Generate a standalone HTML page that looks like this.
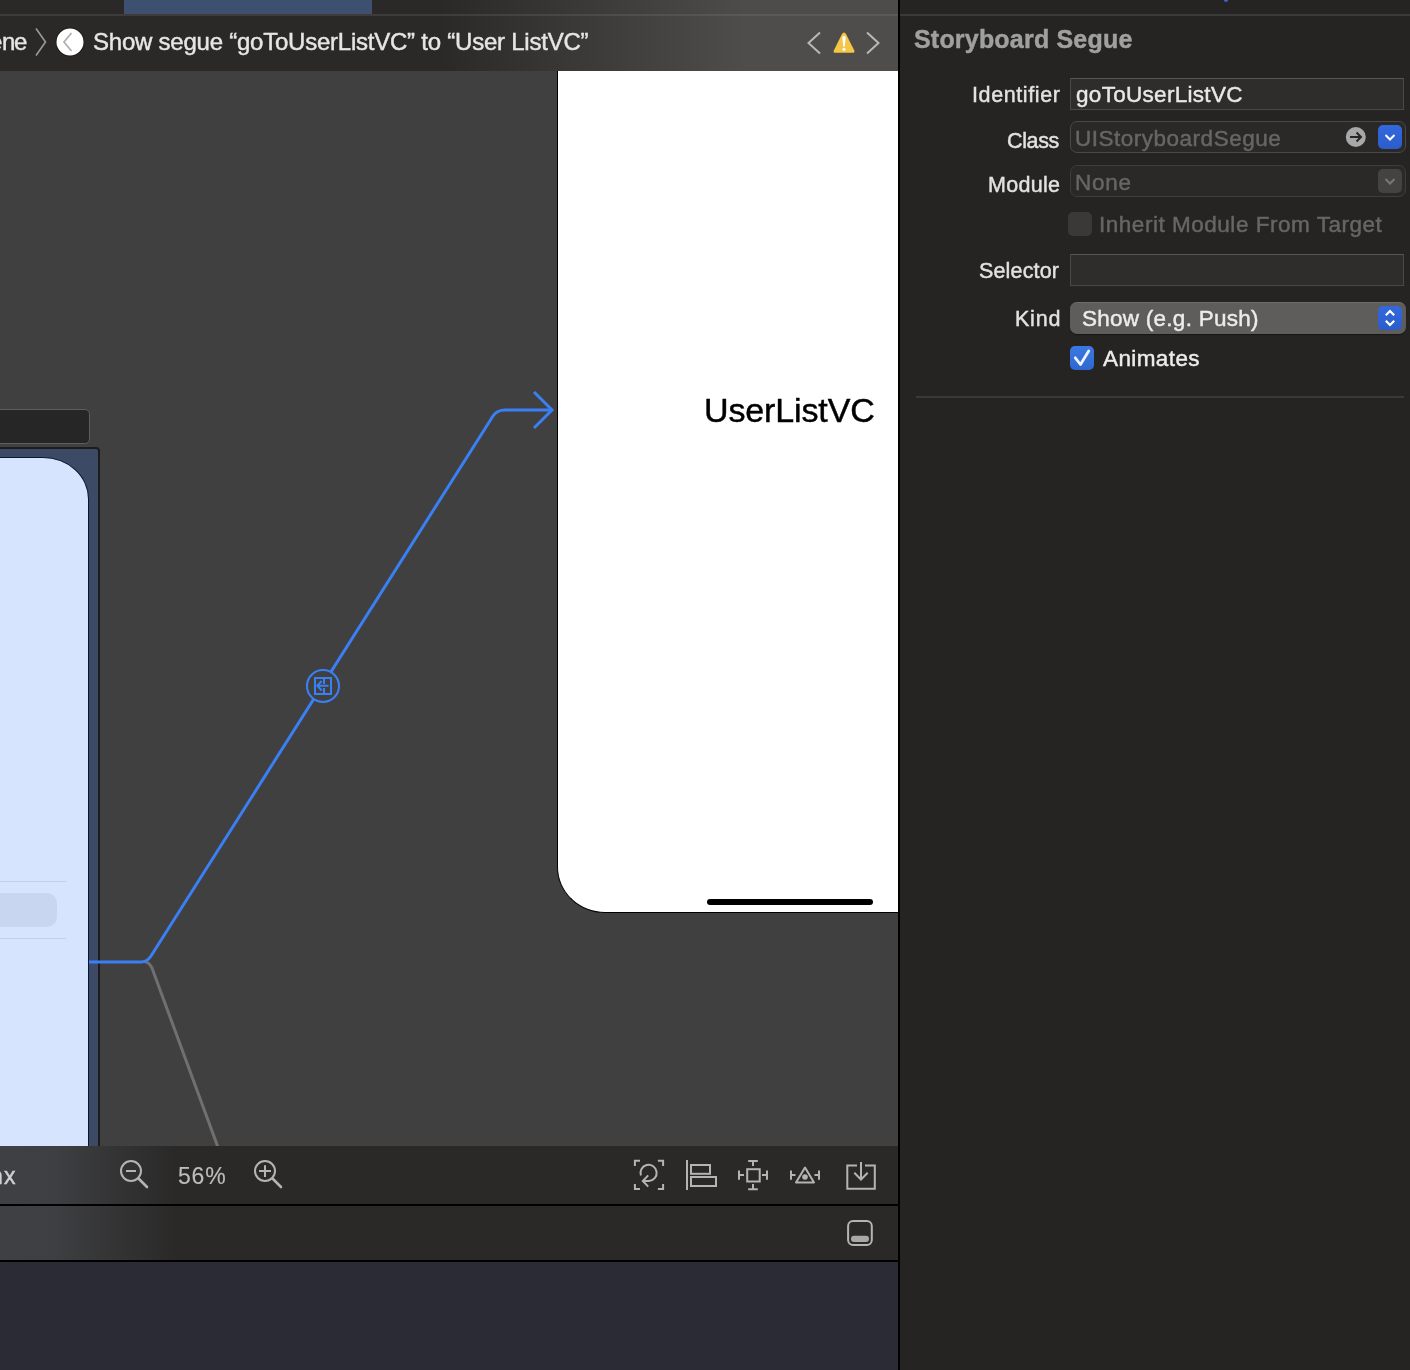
<!DOCTYPE html>
<html><head><meta charset="utf-8">
<style>
*{margin:0;padding:0;box-sizing:border-box}
html,body{width:1410px;height:1370px;overflow:hidden;background:#252423;font-family:"Liberation Sans",sans-serif}
.a{position:absolute}
.t{position:absolute;white-space:nowrap;line-height:1;will-change:transform;-webkit-text-stroke:0.45px currentColor}
svg{position:absolute;left:0;top:0;overflow:visible}
</style></head><body>
<div class="a" style="left:0;top:0;width:898px;height:1370px;background:#404040"></div>
<div class="a" style="left:-10px;top:409px;width:100px;height:35px;background:#262626;border:1.5px solid #5e5e5e;border-radius:5px"></div>
<div class="a" style="left:-10px;top:447px;width:110px;height:720px;background:#3d4a66;border:2px solid #1c1c1c;border-radius:4px"></div>
<div class="a" style="left:-10px;top:457px;width:99px;height:720px;background:#d7e4fd;border:1.5px solid #0a1633;border-top-right-radius:46px 42px"></div>
<div class="a" style="left:0;top:881px;width:66px;height:1px;background:#c3d0e8"></div>
<div class="a" style="left:0;top:938px;width:66px;height:1px;background:#c3d0e8"></div>
<div class="a" style="left:-20px;top:893px;width:77px;height:34px;background:#c8d6f0;border-radius:10px"></div>
<div class="a" style="left:557px;top:71px;width:345px;height:842px;background:#fff;border:1px solid #000;border-top:none;border-bottom-left-radius:48px 46px"></div>
<div class="t" style="left:703.9px;top:393px;font-size:34px;color:#000;font-weight:400;letter-spacing:-0.13px;">UserListVC</div>
<div class="a" style="left:707px;top:899px;width:166px;height:6px;background:#000;border-radius:3px"></div>
<svg width="898" height="1146" style="width:898px;height:1146px">
<path d="M145 962 Q149 962 152 968 L219 1150" fill="none" stroke="#707070" stroke-width="3"/>
<path d="M89 962 H141 Q147 962 151 956 L493 416 Q497 410 505 410 H552" fill="none" stroke="#3b7ff4" stroke-width="3"/>
<path d="M534 392 L552 410 L534 428" fill="none" stroke="#3b7ff4" stroke-width="3"/>
<circle cx="323" cy="686" r="16" fill="#404040" stroke="#3b7ff4" stroke-width="2.1"/>
<rect x="315" y="678" width="16" height="16" fill="none" stroke="#3b7ff4" stroke-width="2"/>
<path d="M324 678 V684 M324 688 V694 M317.5 685.7 H328.6 M321.7 681 L317.3 685.7 L321.7 690.5" fill="none" stroke="#3b7ff4" stroke-width="2"/>
</svg>
<div class="a" style="left:0;top:0;width:898px;height:14px;background:linear-gradient(90deg,#2a2928 0px,#2a2928 440px,#4d4c4a 745px,#4d4c4a 898px)"></div>
<div class="a" style="left:124px;top:0;width:248px;height:14px;background:#3d5070"></div>
<div class="a" style="left:0;top:14px;width:898px;height:2px;background:linear-gradient(90deg,#3d3c3a 0px,#3d3c3a 440px,#5a5957 745px,#5a5957 898px)"></div>
<div class="a" style="left:0;top:16px;width:898px;height:55px;background:linear-gradient(90deg,#2a2928 0px,#2a2928 440px,#4e4d4b 745px,#4e4d4b 898px)"></div>
<div class="t" style="left:-11.3px;top:30px;font-size:24px;color:#e6e6e6;font-weight:400;letter-spacing:0px;">e</div>
<div class="t" style="left:1.7px;top:30px;font-size:24px;color:#e6e6e6;font-weight:400;letter-spacing:0px;">n</div>
<div class="t" style="left:14.2px;top:30px;font-size:24px;color:#e6e6e6;font-weight:400;letter-spacing:0px;">e</div>
<svg><path d="M36 28.5 L45.5 42 L36 55.5" fill="none" stroke="#9a9a9a" stroke-width="1.6"/></svg>
<svg><circle cx="70" cy="42" r="14.5" fill="#1d1d1d"/><circle cx="70" cy="42" r="13.5" fill="#fff"/><path d="M71.5 33 L64 42 L71.5 51" fill="none" stroke="#b0b0b0" stroke-width="1.8"/></svg>
<div class="t" style="left:93px;top:30px;font-size:24px;color:#e6e6e6;font-weight:400;letter-spacing:-0.233px;">Show segue “goToUserListVC” to “User ListVC”</div>
<svg><path d="M820 32.5 L808.5 43 L820 53.5" fill="none" stroke="#b8b8b8" stroke-width="2"/><path d="M867 32.5 L878.5 43 L867 53.5" fill="none" stroke="#b8b8b8" stroke-width="2"/><path d="M844 32.5 Q845.2 32.5 846 34 L854.3 50.5 Q855 52.8 852.5 52.8 H835.5 Q833 52.8 833.8 50.5 L842 34 Q842.8 32.5 844 32.5Z" fill="#f3c646"/><path d="M842.3 36.5 Q844 35.5 845.7 36.5 L844.9 46.5 H843.1Z" fill="#fff"/><circle cx="844" cy="49.3" r="1.6" fill="#fff"/></svg>
<div class="a" style="left:0;top:1146px;width:898px;height:58px;background:linear-gradient(90deg,#3f4043 0px,#3e3f42 55px,#2a2928 175px)"></div>
<div class="a" style="left:0;top:1204px;width:898px;height:2px;background:#000"></div>
<div class="a" style="left:0;top:1206px;width:898px;height:54px;background:linear-gradient(90deg,#3f4043 0px,#3e3f42 55px,#2a2928 175px)"></div>
<div class="a" style="left:0;top:1260px;width:898px;height:2px;background:#000"></div>
<div class="a" style="left:0;top:1262px;width:898px;height:108px;background:#2b2b35"></div>
<div class="t" style="left:-9.8px;top:1165px;font-size:23px;color:#d0d0d3;font-weight:400;letter-spacing:0px;">n</div>
<div class="t" style="left:4.0px;top:1165px;font-size:23px;color:#d0d0d3;font-weight:400;letter-spacing:0px;">x</div>
<div class="t" style="left:177.7px;top:1165px;font-size:23px;color:#bdbdbd;font-weight:400;letter-spacing:0.8px;-webkit-text-stroke:0.15px currentColor">56%</div>
<svg fill="none" stroke="#b4b4b4" stroke-width="2">
<circle cx="131" cy="1171" r="10"/><path d="M126 1171 H136"/><path d="M138.5 1178.5 L147 1187" stroke-width="2.6" stroke-linecap="round"/>
<circle cx="265" cy="1171" r="10"/><path d="M259 1171 H271 M265 1165.3 V1177"/><path d="M272.5 1178.5 L281 1187" stroke-width="2.6" stroke-linecap="round"/>
<path d="M634.9 1166 V1160.8 H640 M657.9 1160.8 H663.1 V1166 M634.9 1183.9 V1189 H640 M657.9 1189 H663.1 V1183.9"/>
<path d="M640.9 1175.5 A8.1 8.1 0 1 1 648.8 1181 H643.5"/>
<path d="M648.2 1175.4 L642.8 1181 L648.2 1186.6"/>
<path d="M687 1160 V1190"/><rect x="691" y="1165" width="19" height="8.8"/><rect x="691" y="1177" width="25" height="9"/>
<rect x="747.2" y="1169.2" width="12.5" height="12.3"/>
<path d="M748.2 1161 H757.8 M753 1161 V1166 M748.2 1189.2 H757.8 M753 1184 V1189.2 M739 1170.4 V1179.7 M739 1175 H744 M767 1170.4 V1179.7 M762 1175 H767"/>
<path d="M791 1170.4 V1179.7 M791 1175 H795.5 M819 1170.4 V1179.7 M814.5 1175 H819"/>
<path d="M805 1167.5 L814 1182.5 H796 Z" stroke-linejoin="round"/><circle cx="805" cy="1177" r="2.8" fill="#b4b4b4" stroke="none"/>
<path d="M857 1165.4 H847.3 V1188.7 H874.8 V1165.4 H865"/>
<path d="M861 1162 V1179 M854.3 1172.7 L861 1179.5 L867.7 1172.7"/>
<rect x="848.1" y="1220.9" width="23.7" height="24.1" rx="5"/>
<rect x="851" y="1235.8" width="18" height="6.2" rx="3" fill="#a8a8a8" stroke="none"/>
</svg>
<div class="a" style="left:898px;top:0;width:2px;height:1370px;background:#000"></div>
<div class="a" style="left:900px;top:0;width:510px;height:1370px;background:#252423"></div>
<div class="a" style="left:900px;top:14px;width:510px;height:2px;background:#3b3a39"></div>
<div class="a" style="left:1224px;top:-2px;width:3.5px;height:3.5px;background:#3a5fc8;border-radius:50%"></div>
<div class="t" style="left:913.5px;top:27px;font-size:25px;color:#a0a0a0;font-weight:700;letter-spacing:0.2px;">Storyboard Segue</div>
<div class="t" style="left:971.9px;top:85px;font-size:21.5px;color:#e2e2e2;font-weight:400;letter-spacing:0.6px;">Identifier</div>
<div class="t" style="left:1007.4px;top:131px;font-size:21.5px;color:#e2e2e2;font-weight:400;letter-spacing:-0.35px;">Class</div>
<div class="t" style="left:987.6px;top:175px;font-size:21.5px;color:#e2e2e2;font-weight:400;letter-spacing:0.28px;">Module</div>
<div class="t" style="left:979.3px;top:261px;font-size:21.5px;color:#e2e2e2;font-weight:400;letter-spacing:0.157px;">Selector</div>
<div class="t" style="left:1014.7px;top:309px;font-size:21.5px;color:#e2e2e2;font-weight:400;letter-spacing:0.767px;">Kind</div>
<div class="a" style="left:1070px;top:78px;width:334px;height:32px;background:#2e2d2c;border:1px solid #4a4948;border-top-color:#555"></div>
<div class="t" style="left:1075.7px;top:84px;font-size:22.5px;color:#e8e8e8;font-weight:400;letter-spacing:0.3px;">goToUserListVC</div>
<div class="a" style="left:1070px;top:121px;width:336px;height:32px;background:#2a2928;border:1px solid #4a4948;border-radius:7px"></div>
<div class="t" style="left:1075.4px;top:128px;font-size:22.5px;color:#666;font-weight:400;letter-spacing:0.506px;">UIStoryboardSegue</div>
<svg><circle cx="1355.8" cy="137" r="10" fill="#a8a8a8"/><path d="M1350 137 H1361 M1356.5 132.5 L1361 137 L1356.5 141.5" fill="none" stroke="#262626" stroke-width="2"/></svg>
<div class="a" style="left:1378px;top:125px;width:24px;height:24px;background:linear-gradient(#3369df,#2b5cca);border-radius:5px"></div>
<svg><path d="M1385.5 135 L1390 139.5 L1394.5 135" fill="none" stroke="#fff" stroke-width="2"/></svg>
<div class="a" style="left:1070px;top:165px;width:336px;height:32px;background:#2a2928;border:1px solid #3e3d3c;border-radius:7px"></div>
<div class="t" style="left:1075.3px;top:172px;font-size:22.5px;color:#666;font-weight:400;letter-spacing:0.7px;">None</div>
<div class="a" style="left:1378px;top:169px;width:24px;height:24px;background:#444342;border-radius:5px"></div>
<svg><path d="M1385.5 179 L1390 183.5 L1394.5 179" fill="none" stroke="#777" stroke-width="2"/></svg>
<div class="a" style="left:1068px;top:212px;width:24px;height:24px;background:#3a3938;border-radius:5px"></div>
<div class="t" style="left:1099.3px;top:214px;font-size:22.5px;color:#666;font-weight:400;letter-spacing:0.524px;">Inherit Module From Target</div>
<div class="a" style="left:1070px;top:254px;width:334px;height:32px;background:#2e2d2c;border:1px solid #4a4948;border-top-color:#555"></div>
<div class="a" style="left:1070px;top:302px;width:336px;height:32px;background:#5e5d5b;border-radius:7px;border-top:1px solid #6e6d6b;box-shadow:0 1px 1px rgba(0,0,0,.4)"></div>
<div class="t" style="left:1082px;top:308px;font-size:22.5px;color:#ececec;font-weight:400;letter-spacing:0.26px;">Show (e.g. Push)</div>
<div class="a" style="left:1378px;top:306px;width:24px;height:24px;background:linear-gradient(#3369df,#2b5cca);border-radius:5px"></div>
<svg><path d="M1385.8 315.3 L1390 311 L1394.2 315.3 M1385.8 320.7 L1390 325 L1394.2 320.7" fill="none" stroke="#fff" stroke-width="2.2"/></svg>
<div class="a" style="left:1070px;top:346px;width:24px;height:24px;background:linear-gradient(#3a79e2,#2f67d0);border-radius:5px"></div>
<svg><path d="M1075.3 357.8 L1080.5 364.5 L1088.7 351" fill="none" stroke="#eef3fb" stroke-width="2.8" stroke-linecap="round" stroke-linejoin="round"/></svg>
<div class="t" style="left:1102.6px;top:348px;font-size:22.5px;color:#ececec;font-weight:400;letter-spacing:0.4px;">Animates</div>
<div class="a" style="left:916px;top:396px;width:488px;height:2px;background:#3a3938"></div>
</body></html>
